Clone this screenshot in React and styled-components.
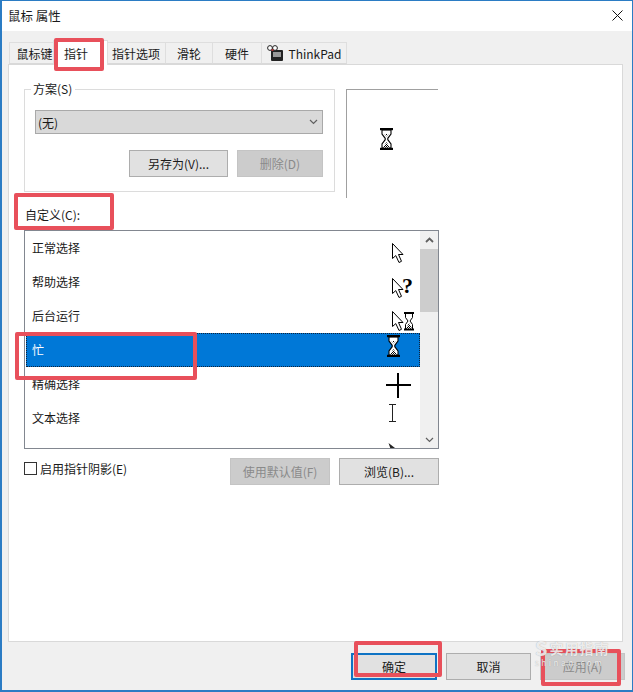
import React from 'react';
import styled, { createGlobalStyle } from 'styled-components';

const Global = createGlobalStyle`
  html, body { margin: 0; padding: 0; background: #fff; }
  body { font-family: "Noto Sans CJK SC", "Liberation Sans", sans-serif; font-size: 12px; color: #1a1a1a; }
  * { box-sizing: border-box; }
`;

const Window = styled.div`
  position: relative;
  width: 633px;
  height: 692px;
  display: flex;
  flex-direction: column;
  border: 1px solid #2b7cc4;
  border-bottom-width: 2px;
  border-left-width: 2px;
  background: #f0f0f0;
  overflow: hidden;
`;

const TitleBar = styled.div`
  height: 30px;
  flex: none;
  background: #fff;
  display: flex;
  align-items: center;
  justify-content: space-between;
  padding: 0 9px 1px 6px;
  font-size: 12.5px;
`;

const Tabs = styled.div`
  display: flex;
  align-items: flex-end;
  height: 33px;
  flex: none;
  padding-left: 7px;
`;

const Tab = styled.div`
  height: ${p => (p.$active ? '25px' : '22px')};
  width: ${p => p.$w}px;
  margin: ${p => (p.$active ? '0 -1px -1px -2px' : '0')};
  padding: 1px ${p => (p.$active ? '9px' : '0')} 0 ${p => (p.$first ? '5px' : '0')};
  display: flex;
  align-items: center;
  justify-content: center;
  gap: 5px;
  background: ${p => (p.$active ? '#fff' : '#f0f0f0')};
  border: 1px solid #dedede;
  border-left-width: ${p => (p.$first || p.$active ? '1px' : '0')};
  border-bottom: ${p => (p.$active ? 'none' : '1px solid #d9d9d9')};
  position: relative;
  z-index: ${p => (p.$active ? 1 : 0)};
  font-size: 12px;
`;

const Panel = styled.div`
  width: 615px;
  height: 578px;
  flex: none;
  margin-left: 6px;
  background: #fff;
  border: 1px solid #d9d9d9;
  padding: 18px 0 0 15px;
`;

const TopRow = styled.div`
  display: flex;
  gap: 11px;
  align-items: flex-start;
`;

const GroupBox = styled.fieldset`
  width: 311px;
  height: 109px;
  margin: 0;
  padding: 15px 10px 0 10px;
  border: 1px solid #dcdcdc;
`;

const Legend = styled.legend`
  padding: 0 3px 0 2px;
  margin-left: -4px;
  font-size: 12px;
  line-height: 12px;
  height: 12px;
`;

const SelectBox = styled.div`
  width: 288px;
  height: 24px;
  background: #d9d9d9;
  border: 1px solid #a9a9a9;
  display: flex;
  align-items: center;
  justify-content: space-between;
  padding: 0 4px 0 2px;
`;

const ButtonRow = styled.div`
  width: 288px;
  display: flex;
  justify-content: flex-end;
  gap: 9px;
  margin-top: 16px;
`;

const Button = styled.div`
  width: ${p => p.$w}px;
  height: 27px;
  display: flex;
  align-items: center;
  justify-content: center;
  font-size: 12px;
  color: ${p => (p.$disabled ? '#8a8a8a' : '#1a1a1a')};
  background: ${p => (p.$disabled ? '#cccccc' : '#e1e1e1')};
  border: ${p => (p.$primary ? '2px solid #0f73c4' : `1px solid ${p.$disabled ? '#c4c4c4' : '#adadad'}`)};
`;

const Preview = styled.div`
  width: 92px;
  height: 109px;
  margin-top: 6px;
  border-top: 1px solid #a0a0a0;
  border-left: 1px solid #a0a0a0;
  padding: 38px 0 0 33px;
`;

const CustomLabel = styled.div`
  margin-top: 9px;
  padding-left: 1px;
  line-height: 16px;
  height: 16px;
`;

const ListBox = styled.div`
  width: 415px;
  height: 219px;
  margin-top: 7px;
  border: 1px solid #828790;
  display: flex;
  overflow: hidden;
`;

const Rows = styled.div`
  flex: 1;
  height: 100%;
  overflow: hidden;
  padding: 0 0 0 1px;
`;

const Row = styled.div`
  height: 34px;
  padding: 0 0 0 6px;
  display: flex;
  align-items: center;
  justify-content: space-between;
  color: ${p => (p.$selected ? '#fff' : '#1a1a1a')};
  background: ${p => (p.$selected ? '#0078d7' : 'transparent')};
  outline: ${p => (p.$selected ? '1px dotted #10233a' : 'none')};
  outline-offset: -1px;
`;

const RowName = styled.span`
  margin-top: -1px;
`;

const CursorSlot = styled.div`
  width: 36px;
  height: 34px;
  flex: none;
  display: flex;
  align-items: flex-start;
  padding-left: ${p => p.$x}px;
  padding-top: ${p => p.$y}px;
`;

const Scrollbar = styled.div`
  width: 18px;
  flex: none;
  background: #f0f0f0;
  display: flex;
  flex-direction: column;
`;

const ScrollArrow = styled.div`
  height: ${p => p.$h}px;
  flex: none;
  display: flex;
  align-items: center;
  justify-content: center;
`;

const ScrollThumb = styled.div`
  height: 63px;
  flex: none;
  background: #cdcdcd;
`;

const ScrollSpace = styled.div`
  flex: 1;
`;

const BottomRow = styled.div`
  width: 415px;
  display: flex;
  align-items: flex-start;
  margin-top: 9px;
  height: 27px;
`;

const CheckLabel = styled.label`
  display: flex;
  align-items: center;
  gap: 3px;
  flex: 1;
  height: 21px;
`;

const CheckBox = styled.span`
  width: 13px;
  height: 13px;
  border: 1px solid #333;
  background: #fff;
  display: block;
`;

const BottomButtons = styled.div`
  display: flex;
  gap: 9px;
`;

const Footer = styled.div`
  flex: 1;
  display: flex;
  justify-content: flex-end;
  align-items: flex-start;
  gap: 9px;
  padding: 11px 7px 0 0;
`;

const Mark = styled.div`
  position: absolute;
  border: 4px solid #e8505b;
  border-radius: 2px;
  pointer-events: none;
  z-index: 5;
  left: ${p => p.$x}px;
  top: ${p => p.$y}px;
  width: ${p => p.$w}px;
  height: ${p => p.$h}px;
`;

const Watermark = styled.div`
  position: absolute;
  left: 533px;
  top: 637px;
  width: 90px;
  color: rgba(255, 255, 255, 0.8);
  text-shadow: 0 0 1px rgba(110, 110, 110, 0.6);
  z-index: 6;
  pointer-events: none;
  white-space: nowrap;
`;

const WatermarkTop = styled.div`
  display: flex;
  align-items: center;
  gap: 1px;
  height: 20px;
  font-size: 14px;
  font-weight: 700;
  letter-spacing: 1px;
`;

const WatermarkS = styled.span`
  font-size: 20px;
  line-height: 20px;
`;

const WatermarkSub = styled.div`
  font-size: 8px;
  line-height: 10px;
  letter-spacing: 2.6px;
`;

const Cursor = styled.svg`
  display: block;
  overflow: visible;
`;

// Cursors drawn by hand, they are little bitmaps in the real dialog
const ArrowShape = () => (
  <path
    d="M0.5 0.5 V15.5 L3.8 12.6 L7 19.5 L9.5 18.3 L6.5 11.5 H11 Z"
    fill="#fff"
    stroke="#000"
    strokeWidth="1"
  />
);

const Arrow = () => (
  <Cursor width="13" height="21" viewBox="0 0 13 21"><ArrowShape /></Cursor>
);

const Sand = () => (
  <defs>
    <pattern id="sand" width="2" height="2" patternUnits="userSpaceOnUse">
      <rect width="2" height="2" fill="#fff" />
      <rect width="1" height="1" fill="#000" />
      <rect x="1" y="1" width="1" height="1" fill="#000" />
    </pattern>
  </defs>
);

const Hourglass = () => (
  <Cursor width="13" height="22" viewBox="0 0 13 22">
    <Sand />
    <path d="M2 2 V6 L5.2 10.3 V11.7 L2 16 V20 H11 V16 L7.8 11.7 V10.3 L11 6 V2 Z" fill="#fff" stroke="#000" strokeWidth="1.1" />
    <rect x="0" y="0" width="13" height="2.2" fill="#000" />
    <rect x="0" y="19.8" width="13" height="2.2" fill="#000" />
    <path d="M4.5 6 H8.5 L6.5 8.5 Z" fill="url(#sand)" />
    <path d="M6.5 14 L9.8 19.5 H3.2 Z" fill="url(#sand)" />
  </Cursor>
);

const ArrowHelp = () => (
  <Cursor width="26" height="20" viewBox="0 0 26 20">
    <ArrowShape />
    <text x="10" y="15" fontFamily="Liberation Serif, serif" fontWeight="700" fontSize="22" fill="#000">?</text>
  </Cursor>
);

const ArrowBusy = () => (
  <Cursor width="24" height="21" viewBox="0 0 24 21">
    <Sand />
    <g transform="translate(12 1)">
      <path d="M1.5 1 V5.5 L4 9 L1.5 12.5 V17 H8.5 V12.5 L6 9 L8.5 5.5 V1 Z" fill="#fff" stroke="#000" strokeWidth="1" />
      <rect x="0" y="0" width="10" height="2" fill="#000" />
      <rect x="0" y="16.5" width="10" height="2" fill="#000" />
      <path d="M5 11 L8 16.5 H2 Z" fill="url(#sand)" />
    </g>
    <ArrowShape />
  </Cursor>
);

const Cross = () => (
  <Cursor width="25" height="25" viewBox="0 0 25 25" shapeRendering="crispEdges">
    <rect x="11" y="0" width="2" height="25" fill="#000" />
    <rect x="0" y="11" width="25" height="2" fill="#000" />
  </Cursor>
);

const IBeam = () => (
  <Cursor width="9" height="18" viewBox="0 0 9 18" shapeRendering="crispEdges">
    <path d="M1 0.5 H8 M1 17.5 H8 M4.5 0.5 V17.5" stroke="#222" strokeWidth="1" fill="none" />
  </Cursor>
);

const PenTip = () => (
  <Cursor width="8" height="8" viewBox="0 0 8 8">
    <path d="M0.5 0 L7 5 L3 7 Z" fill="#222" />
  </Cursor>
);

const Chevron = ({ up, color = '#606060' }) => (
  <svg width="9" height="6" viewBox="0 0 9 6">
    <path d={up ? 'M1 5 L4.5 1.5 L8 5' : 'M1 1 L4.5 4.5 L8 1'} fill="none" stroke={color} strokeWidth={up ? 1.8 : 1.2} />
  </svg>
);

const ThinkPadIcon = () => (
  <svg width="17" height="17" viewBox="0 0 17 17">
    <rect x="4" y="5" width="12" height="11" rx="1" fill="#222" />
    <rect x="6" y="7" width="8" height="5" fill="#999" />
    <circle cx="3" cy="3" r="2.4" fill="#fff" stroke="#222" />
    <circle cx="8" cy="3" r="2.4" fill="#fff" stroke="#222" />
    <rect x="4.5" y="4" width="2" height="2" fill="#a33" />
  </svg>
);

const rows = [
  { name: '正常选择', icon: <Arrow />, x: 8, y: 12 },
  { name: '帮助选择', icon: <ArrowHelp />, x: 8, y: 13 },
  { name: '后台运行', icon: <ArrowBusy />, x: 8, y: 12 },
  { name: '忙', icon: <Hourglass />, x: 3, y: 2, selected: true },
  { name: '精确选择', icon: <Cross />, x: 2, y: 6 },
  { name: '文本选择', icon: <IBeam />, x: 4, y: 3 },
  { name: '', icon: <PenTip />, x: 4, y: 8 },
];

export default function App() {
  return (
    <>
      <Global />
      <Window>
        <TitleBar>
          <span>鼠标 属性</span>
          <svg width="11" height="11" viewBox="0 0 11 11">
            <path d="M0.5 0.5 L10.5 10.5 M10.5 0.5 L0.5 10.5" stroke="#111" strokeWidth="1" />
          </svg>
        </TitleBar>
        <Tabs>
          <Tab $first $w={46}>鼠标键</Tab>
          <Tab $active $w={55}>指针</Tab>
          <Tab $w={59}>指针选项</Tab>
          <Tab $w={47}>滑轮</Tab>
          <Tab $w={49}>硬件</Tab>
          <Tab $w={85}><ThinkPadIcon />ThinkPad</Tab>
        </Tabs>
        <Panel>
          <TopRow>
            <GroupBox>
              <Legend>方案(S)</Legend>
              <SelectBox>
                <span>(无)</span>
                <Chevron />
              </SelectBox>
              <ButtonRow>
                <Button $w={99}>另存为(V)...</Button>
                <Button $w={86} $disabled>删除(D)</Button>
              </ButtonRow>
            </GroupBox>
            <Preview><Hourglass /></Preview>
          </TopRow>
          <CustomLabel>自定义(C):</CustomLabel>
          <ListBox>
            <Rows>
              {rows.map(r => (
                <Row key={r.name} $selected={r.selected}>
                  <RowName>{r.name}</RowName>
                  <CursorSlot $x={r.x} $y={r.y}>{r.icon}</CursorSlot>
                </Row>
              ))}
            </Rows>
            <Scrollbar>
              <ScrollArrow $h={18}><Chevron up /></ScrollArrow>
              <ScrollThumb />
              <ScrollSpace />
              <ScrollArrow $h={17}><Chevron /></ScrollArrow>
            </Scrollbar>
          </ListBox>
          <BottomRow>
            <CheckLabel><CheckBox />启用指针阴影(E)</CheckLabel>
            <BottomButtons>
              <Button $w={100} $disabled>使用默认值(F)</Button>
              <Button $w={100}>浏览(B)...</Button>
            </BottomButtons>
          </BottomRow>
        </Panel>
        <Footer>
          <Button $w={86} $primary>确定</Button>
          <Button $w={85}>取消</Button>
          <Button $w={85} $disabled>应用(A)</Button>
        </Footer>
        <Mark $x={52} $y={37} $w={50} $h={33} />
        <Mark $x={12} $y={192} $w={100} $h={37} />
        <Mark $x={13} $y={331} $w={182} $h={48} />
        <Mark $x={352} $y={640} $w={88} $h={36} />
        <Mark $x={539} $y={648} $w={80} $h={37} />
        <Watermark>
          <WatermarkTop><WatermarkS>S</WatermarkS>实用指南</WatermarkTop>
          <WatermarkSub>shinan.com</WatermarkSub>
        </Watermark>
      </Window>
    </>
  );
}
